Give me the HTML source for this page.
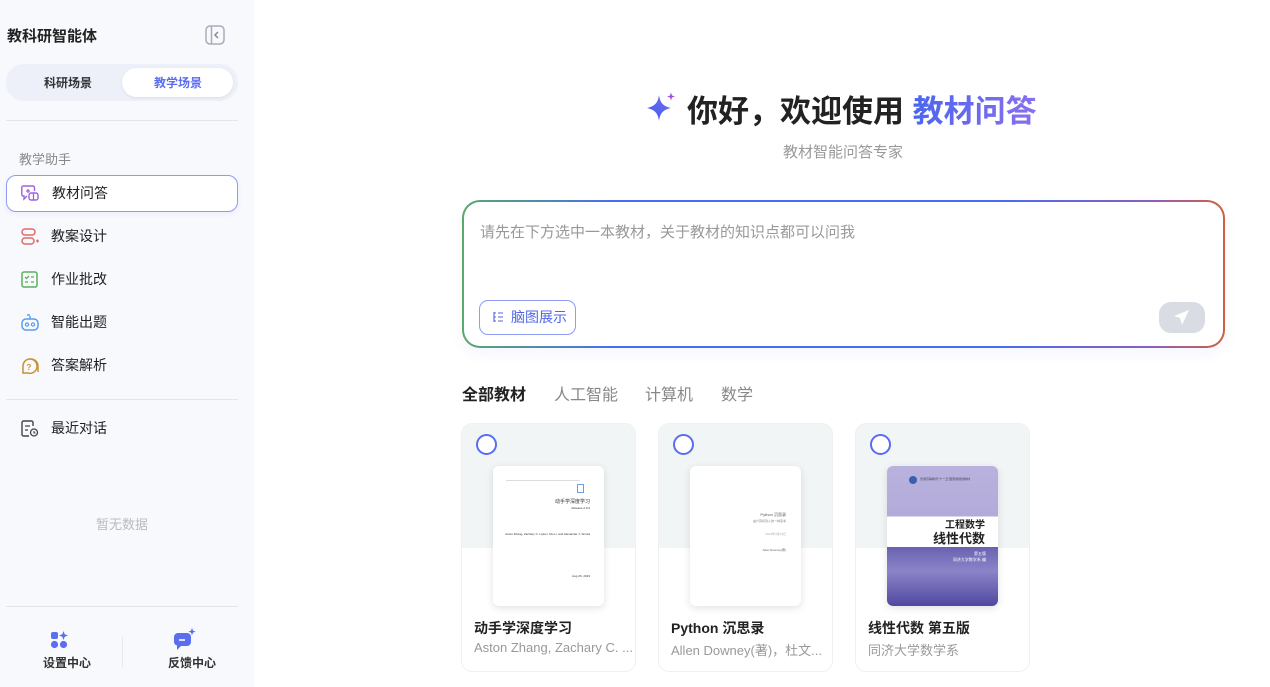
<!DOCTYPE html>
<html><head><meta charset="utf-8"><style>
*{box-sizing:border-box;margin:0;padding:0}
body{width:1270px;height:687px;overflow:hidden;background:#fff;font-family:"Liberation Sans","Noto Sans CJK SC",sans-serif;color:#222;position:relative}
.abs{position:absolute}
.sb{position:absolute;left:0;top:0;width:254px;height:687px;background:#f8f9fd}
.hr{position:absolute;left:6px;width:232px;height:1px;background:#e3e5ea}
.item{position:absolute;left:6px;width:232px;height:37px;font-size:14px;color:#222;line-height:37px;padding-left:45px}
.item svg{position:absolute;left:15px;top:10px}
.card{position:absolute;top:424px;width:173px;height:247px;border-radius:10px;background:#fff;box-shadow:0 0 0 1px #eef0f3;overflow:hidden}
.card .top{position:absolute;left:0;top:0;width:100%;height:124px;background:#f2f5f6}
.card .rad{position:absolute;left:14px;top:10px;width:21px;height:21px;border:2px solid #5a6cf0;border-radius:50%;background:#fff}
.card .book{position:absolute;left:31px;top:42px;width:111px;height:140px;border-radius:6px;background:#fff;box-shadow:0 2px 8px rgba(0,0,0,.12);overflow:hidden}
.card .t{position:absolute;left:12px;top:194px;font-size:14px;font-weight:bold;color:#222}
.card .s{position:absolute;left:12px;top:216px;font-size:13px;color:#999;white-space:nowrap}
.tab{position:absolute;top:381px;font-size:16px;color:#888}
</style></head><body>
<div class="sb">
 <div class="abs" style="left:7px;top:25px;font-size:15px;font-weight:bold">教科研智能体</div>
 <svg class="abs" style="left:205px;top:25px" width="20" height="20" viewBox="0 0 20 20"><rect x="1" y="1" width="18" height="18" rx="4" fill="none" stroke="#aab" stroke-width="1.5"/><line x1="6.5" y1="1" x2="6.5" y2="19" stroke="#aab" stroke-width="1.5"/><path d="M13 7l-3 3 3 3" fill="none" stroke="#889" stroke-width="1.5"/></svg>
 <div class="abs" style="left:6px;top:64px;width:232px;height:37px;border-radius:18px;background:#edf0f9"></div>
 <div class="abs" style="left:122px;top:68px;width:111px;height:29px;border-radius:15px;background:#fff;box-shadow:0 1px 3px rgba(0,0,0,.08)"></div>
 <div class="abs" style="left:44px;top:74px;font-size:12px;font-weight:bold;color:#333">科研场景</div>
 <div class="abs" style="left:154px;top:74px;font-size:12px;font-weight:bold;color:#5b6ef0">教学场景</div>
 <div class="hr" style="top:120px"></div>
 <div class="abs" style="left:19px;top:149px;font-size:13px;color:#888">教学助手</div>
 <div class="item" style="top:175px;background:#fff;border:1px solid #8e9cf2;border-radius:10px;line-height:35px;box-shadow:0 2px 6px rgba(90,108,240,.08)"><svg width="18" height="17" viewBox="0 0 18 17" style="left:14px;top:9px"><path d="M2 1h10a1.5 1.5 0 011.5 1.5V6M2 1A1.5 1.5 0 00.8 2.5v7A1.5 1.5 0 002 11h1v3l3-3" fill="none" stroke="#a060e0" stroke-width="1.4"/><path d="M5 6h4M7 4v4" stroke="#a060e0" stroke-width="1.3"/><rect x="8" y="8" width="9" height="7" rx="2" fill="none" stroke="#a060e0" stroke-width="1.4"/><line x1="12.5" y1="8" x2="12.5" y2="15" stroke="#a060e0" stroke-width="1.3"/></svg>教材问答</div>
 <div class="item" style="top:218px"><svg width="18" height="17" viewBox="0 0 18 17"><rect x="1" y="1" width="13" height="6" rx="3" fill="none" stroke="#e06a6a" stroke-width="1.5"/><rect x="1" y="10" width="12" height="6" rx="3" fill="none" stroke="#e06a6a" stroke-width="1.5"/><path d="M15 13h3M16.5 11.5v3" stroke="#e06a6a" stroke-width="1.3"/></svg>教案设计</div>
 <div class="item" style="top:261px"><svg width="17" height="17" viewBox="0 0 17 17"><rect x="1" y="1" width="15" height="15" rx="2" fill="none" stroke="#5ab05a" stroke-width="1.5"/><path d="M4 6l1.5 1.5L8 5M4 11h3M10 6h3M10 11h3" stroke="#5ab05a" stroke-width="1.3" fill="none"/></svg>作业批改</div>
 <div class="item" style="top:304px"><svg width="18" height="17" viewBox="0 0 18 17"><rect x="1" y="5" width="16" height="11" rx="4" fill="none" stroke="#5b9cf0" stroke-width="1.5"/><path d="M9 5V2M6 1h3" stroke="#5b9cf0" stroke-width="1.4"/><circle cx="6" cy="10.5" r="1.6" fill="none" stroke="#5b9cf0" stroke-width="1.2"/><circle cx="12" cy="10.5" r="1.6" fill="none" stroke="#5b9cf0" stroke-width="1.2"/></svg>智能出题</div>
 <div class="item" style="top:347px"><svg width="18" height="17" viewBox="0 0 18 17"><path d="M7 16H2V9a7 7 0 0114 0 7 7 0 01-9 7z" fill="none" stroke="#c99030" stroke-width="1.5"/><path d="M10 2a7 7 0 017 7v6" fill="none" stroke="#c99030" stroke-width="1.4"/><text x="5.5" y="13" font-size="8" font-weight="bold" fill="#c99030" font-family="Liberation Sans">?</text></svg>答案解析</div>
 <div class="hr" style="top:399px"></div>
 <div class="item" style="top:410px"><svg width="18" height="17" viewBox="0 0 18 17"><path d="M12 6V2.5A1.5 1.5 0 0010.5 1h-8A1.5 1.5 0 001 2.5v12A1.5 1.5 0 002.5 16H8" fill="none" stroke="#444" stroke-width="1.4"/><path d="M4 6h5M4 10h3" stroke="#444" stroke-width="1.3"/><circle cx="13" cy="12.5" r="3.5" fill="none" stroke="#444" stroke-width="1.3"/><path d="M13 11v2h1.5" stroke="#444" stroke-width="1.1" fill="none"/></svg>最近对话</div>
 <div class="abs" style="left:0;width:244px;top:514px;text-align:center;font-size:13px;color:#bbb">暂无数据</div>
 <div class="hr" style="top:606px"></div>
 <svg class="abs" style="left:50px;top:631px" width="19" height="18" viewBox="0 0 19 18"><rect x="1" y="1" width="7" height="7" rx="2" fill="#5b6ef0"/><circle cx="4.5" cy="13.5" r="3.6" fill="#5b6ef0"/><circle cx="13.5" cy="13.5" r="3.6" fill="#5b6ef0"/><path d="M13.5 0l1.2 3.3L18 4.5l-3.3 1.2-1.2 3.3-1.2-3.3L9 4.5l3.3-1.2z" fill="#5b6ef0"/></svg>
 <div class="abs" style="left:43px;top:654px;font-size:12px;font-weight:bold;color:#333">设置中心</div>
 <div class="abs" style="left:122px;top:637px;width:1px;height:30px;background:#e6e8ec"></div>
 <svg class="abs" style="left:172px;top:628px" width="24" height="24" viewBox="0 0 24 24"><path d="M6 5h9a4 4 0 014 4v5a4 4 0 01-4 4H9l-4 4v-4.5A4 4 0 012 14V9a4 4 0 014-4z" fill="#5b6ef0"/><path d="M7 12h6" stroke="#fff" stroke-width="1.6"/><path d="M20 0l1 2.6 2.6 1-2.6 1-1 2.6-1-2.6-2.6-1 2.6-1z" fill="#5b6ef0"/></svg>
 <div class="abs" style="left:168px;top:654px;font-size:12px;font-weight:bold;color:#333">反馈中心</div>
</div>

<svg class="abs" style="left:645px;top:92px" width="32" height="32" viewBox="0 0 32 32"><defs><linearGradient id="g1" x1="0" y1="1" x2="1" y2="0"><stop offset="0" stop-color="#3c5ef0"/><stop offset="1" stop-color="#7a6cf0"/></linearGradient></defs><path d="M14 3c1.2 8 4 11 12 13-8 2-10.8 5-12 13-1.2-8-4-11-12-13 8-2 10.8-5 12-13z" fill="url(#g1)"/><path d="M26 0.5l1 3 3 1-3 1-1 3-1-3-3-1 3-1z" fill="#a04fd8"/></svg>
<div class="abs" style="left:687px;top:86px;font-size:31px;font-weight:bold;color:#222;white-space:nowrap">你好，欢迎使用 <span style="background:linear-gradient(90deg,#4a66ef,#8a70ee);-webkit-background-clip:text;color:transparent">教材问答</span></div>
<div class="abs" style="left:783px;top:141px;font-size:15px;color:#999">教材智能问答专家</div>

<div class="abs" style="left:462px;top:200px;width:763px;height:148px;border-radius:18px;padding:2px;background:linear-gradient(90deg,#5aa86a 0%,#4a6cf0 20%,#4a6cf0 70%,#8a5fc0 90%,#d0603a 100%);box-shadow:0 6px 14px rgba(90,108,240,.06)">
 <div style="width:100%;height:100%;border-radius:16px;background:#fff"></div>
</div>
<div class="abs" style="left:480px;top:221px;font-size:15px;color:#999">请先在下方选中一本教材，关于教材的知识点都可以问我</div>
<div class="abs" style="left:479px;top:300px;width:97px;height:35px;border:1px solid #8e9cf2;border-radius:9px;font-size:14px;color:#4f66e8;line-height:33px;padding-left:31px">脑图展示</div>
<svg class="abs" style="left:492px;top:311px" width="12" height="12" viewBox="0 0 12 12"><path d="M2 1v10M2 2h2M2 6h2M2 10h2M6 2h5M6 6h5M6 10h5" stroke="#4f66e8" stroke-width="1.1" fill="none"/></svg>
<div class="abs" style="left:1159px;top:302px;width:46px;height:31px;border-radius:12px;background:#d9dce3"></div>
<svg class="abs" style="left:1173px;top:309px" width="17" height="17" viewBox="0 0 17 17"><path d="M16 1L1 7l6 2 2 7z" fill="#fff"/></svg>

<div class="tab" style="left:462px;color:#222;font-weight:bold">全部教材</div>
<div class="tab" style="left:554px">人工智能</div>
<div class="tab" style="left:645px">计算机</div>
<div class="tab" style="left:721px">数学</div>

<div class="card" style="left:462px"><div class="top"></div><div class="rad"></div>
 <div class="book"><div class="abs" style="left:13px;top:14px;width:74px;height:1px;background:#ddd"></div>
 <div class="abs" style="left:84px;top:18px;width:7px;height:9px;border:1px solid #6aa0e0"></div>
 <div class="abs" style="right:14px;top:32px;font-size:5px;color:#333">动手学深度学习</div>
 <div class="abs" style="right:14px;top:40px;font-size:3px;color:#333">Release 2.0.0</div>
 <div class="abs" style="right:14px;top:66px;font-size:3px;color:#333;white-space:nowrap">Aston Zhang, Zachary C. Lipton, Mu Li, and Alexander J. Smola</div>
 <div class="abs" style="right:14px;top:108px;font-size:3px;color:#333">Aug 26, 2023</div></div>
 <div class="t">动手学深度学习</div><div class="s">Aston Zhang, Zachary C. ...</div></div>

<div class="card" style="left:659px"><div class="top"></div><div class="rad"></div>
 <div class="book"><div class="abs" style="right:15px;top:46px;font-size:4px;color:#555">Python 沉思录</div>
 <div class="abs" style="right:15px;top:53px;font-size:3px;color:#888">由计算机到人的一种思考</div>
 <div class="abs" style="right:15px;top:66px;font-size:3px;color:#aaa">2023年3月13日</div>
 <div class="abs" style="right:15px;top:82px;font-size:3px;color:#666">Allen Downey(著)</div></div>
 <div class="t">Python 沉思录</div><div class="s">Allen Downey(著)，杜文...</div></div>

<div class="card" style="left:856px"><div class="top"></div><div class="rad"></div>
 <div class="book" style="background:linear-gradient(180deg,#b9b2de 0,#b2aad8 36%,#fff 36%,#fff 58%,#6a62b0 58%,#8b84c8 75%,#5048a0 100%)">
 <div class="abs" style="left:22px;top:10px;width:8px;height:8px;border-radius:50%;background:#3a60b0"></div>
 <div class="abs" style="left:33px;top:11px;font-size:3px;color:#445">普通高等教育"十一五"国家级规划教材</div>
 <div class="abs" style="right:13px;top:50px;font-size:10px;font-weight:bold;color:#222">工程数学</div>
 <div class="abs" style="right:13px;top:62px;font-size:13px;font-weight:bold;color:#222">线性代数</div>
 <div class="abs" style="right:12px;top:85px;font-size:4px;color:#fff">第五版</div>
 <div class="abs" style="right:12px;top:91px;font-size:4px;color:#fff">同济大学数学系 编</div></div>
 <div class="t">线性代数 第五版</div><div class="s">同济大学数学系</div></div>
</body></html>
